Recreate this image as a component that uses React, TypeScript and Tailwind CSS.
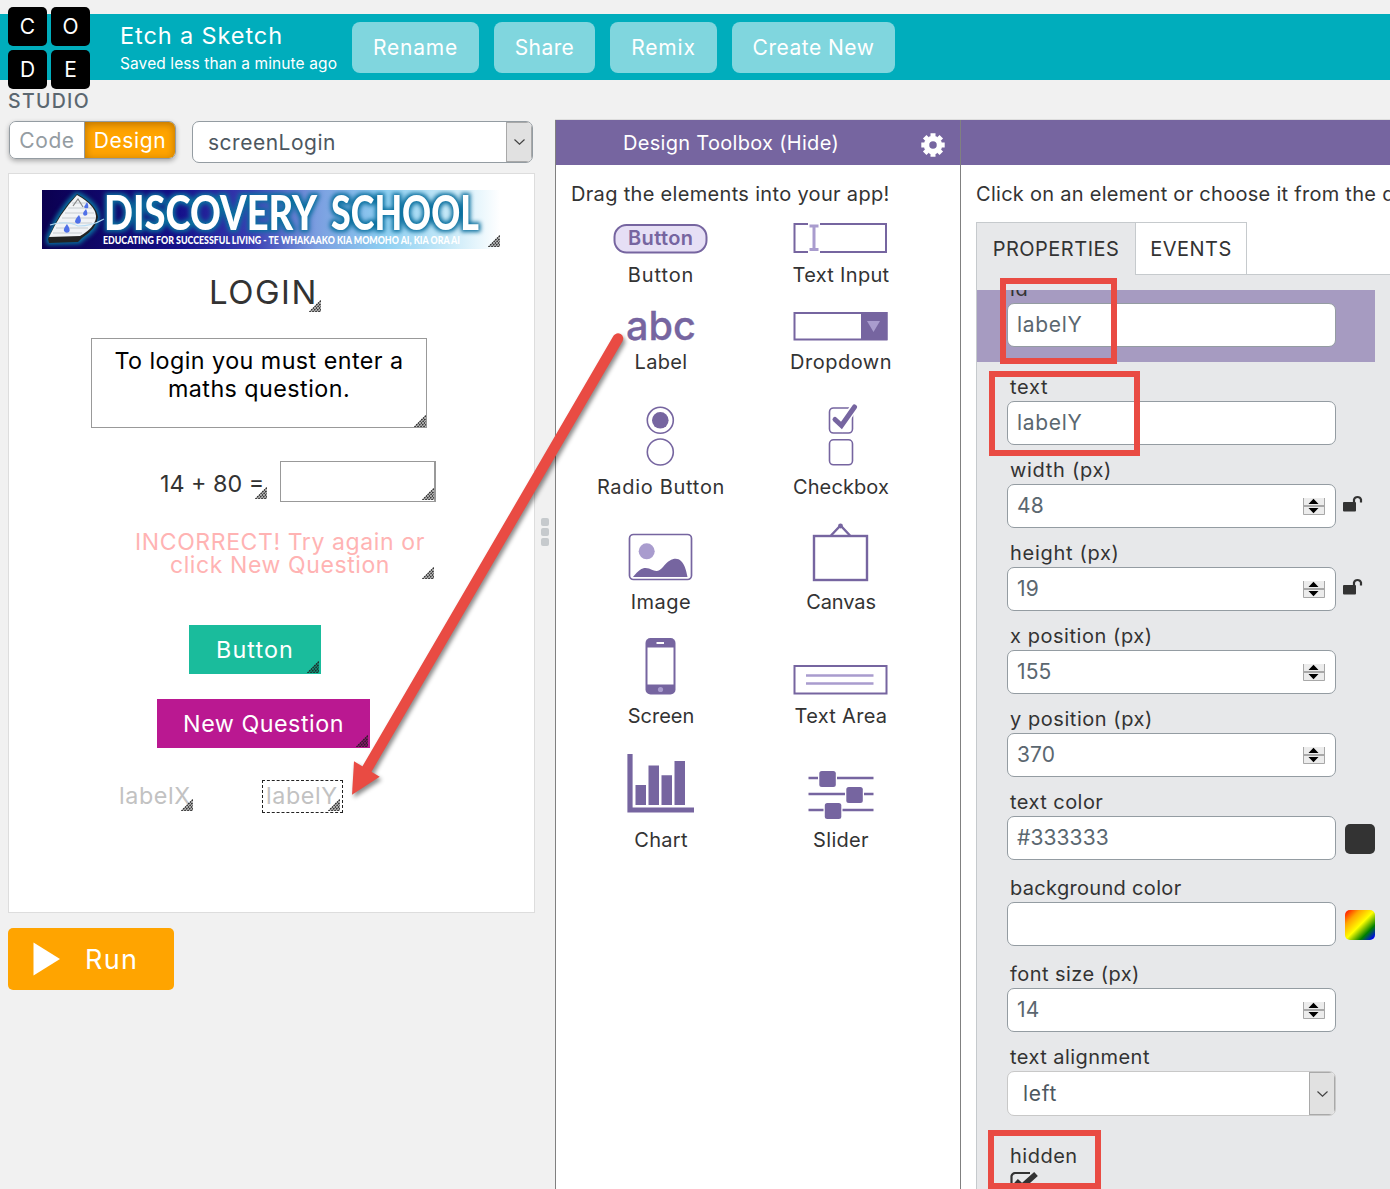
import type { ReactNode } from "react";

const PURPLE = "#7665a0";
const LILAC = "#a99cce";

function Grip({ className }: { className: string }) {
  return (
    <svg className={`absolute ${className}`} width="12" height="12" viewBox="0 0 12 12">
      <path d="M0 12L12 0V12Z" fill="#000" fillOpacity="0.25" />
      <path
        d="M0.5 12L12 0.5M3.5 12L12 3.5M6.5 12L12 6.5M9.5 12L12 9.5"
        stroke="#222"
        strokeWidth="1.3"
        strokeDasharray="1.6 0.8"
      />
    </svg>
  );
}

function LogoTile({ children }: { children: string }) {
  return (
    <div className="flex h-[39px] w-[39px] items-center justify-center rounded-[5px] bg-black text-[21px] leading-none text-white">
      {children}
    </div>
  );
}

function Logo() {
  return (
    <div className="absolute left-[8px] top-[7px] w-[82px]">
      <div className="grid grid-cols-2 gap-[4px]">
        <LogoTile>C</LogoTile>
        <LogoTile>O</LogoTile>
        <LogoTile>D</LogoTile>
        <LogoTile>E</LogoTile>
      </div>
      <div className="mt-[1px] text-[19.5px] font-medium leading-[22px] tracking-[1.3px] text-[#5b6770]">STUDIO</div>
    </div>
  );
}

function HeaderButton({ className, children }: { className: string; children: string }) {
  return (
    <button className={`h-[51px] rounded-[8px] bg-[#80d6de] pt-px text-[21px] text-white ${className}`}>{children}</button>
  );
}

function Header() {
  return (
    <header className="relative pt-[14px]">
      <div className="flex h-[66px] bg-[#00adbc] pl-[120px] text-white">
        <div className="w-[232px] whitespace-nowrap pt-[7px]">
          <div className="text-[23.5px] leading-[30px] tracking-[0.9px]">Etch a Sketch</div>
          <div className="pt-px text-[15.5px] leading-[23px] tracking-[0.1px]">Saved less than a minute ago</div>
        </div>
        <div className="flex gap-[15px] pt-[8px]">
          <HeaderButton className="w-[127px] tracking-[0.8px]">Rename</HeaderButton>
          <HeaderButton className="w-[101px] tracking-[0.4px]">Share</HeaderButton>
          <HeaderButton className="w-[107px] tracking-[0.8px]">Remix</HeaderButton>
          <HeaderButton className="w-[163px] tracking-[0.5px]">Create New</HeaderButton>
        </div>
      </div>
      <Logo />
    </header>
  );
}

function DropArrow({ className }: { className: string }) {
  return (
    <span className={`flex items-center justify-center border border-[#a9a9a9] bg-[#e1e1e1] ${className}`}>
      <svg width="11" height="6" viewBox="0 0 11 6" fill="none" stroke="#444" strokeWidth="1.2">
        <path d="M0.5 0.5L5.5 5.2L10.5 0.5" />
      </svg>
    </span>
  );
}

function Banner() {
  return (
    <svg className="absolute left-[33px] top-[16px]" width="458" height="59" viewBox="42 190 458 59">
      <defs>
        <linearGradient id="sky">
          <stop offset="0" stopColor="#0b0050" />
          <stop offset="0.3" stopColor="#15108a" />
          <stop offset="0.46" stopColor="#3b3fb4" />
          <stop offset="0.6" stopColor="#7b9ee0" />
          <stop offset="0.75" stopColor="#8fd0f2" />
          <stop offset="0.88" stopColor="#c4e8f8" />
          <stop offset="1" stopColor="#fff" />
        </linearGradient>
        <filter id="glow" x="-10%" y="-30%" width="120%" height="160%" colorInterpolationFilters="sRGB">
          <feMorphology in="SourceAlpha" operator="dilate" radius="2" result="fat" />
          <feGaussianBlur in="fat" stdDeviation="2" result="soft" />
          <feFlood floodColor="#0a6f9e" />
          <feComposite in2="soft" operator="in" result="halo" />
          <feMerge>
            <feMergeNode in="halo" />
            <feMergeNode in="SourceGraphic" />
          </feMerge>
        </filter>
      </defs>
      <rect x="42" y="190" width="458" height="59" fill="url(#sky)" />
      <g filter="url(#glow)">
        <path d="M48 239Q58 213 77 194Q96 204 98 217Q97 228 82 238L78 242L49 243Z" fill="#222" />
      </g>
      <path d="M49 237Q60 213 77 195Q95 205 96 216Q96 227 80 236Z" fill="#f1f3f6" />
      <path d="M72 203H86M68 208H92M65 213H94M62 218H95M59 223H92M56 228H88M53 233H82" stroke="#bcc0c8" strokeWidth="0.8" />
      <path d="M73 206L78 199L83 207" stroke="#888" fill="none" strokeWidth="1.2" />
      <path d="M50 225Q66 220 78 226Q92 226 104 219" stroke="#b8dcf4" fill="none" strokeWidth="1.2" />
      <g fill="#4f70e8">
        <path d="M67 224Q71 230 69 232Q66 234 64 231Q63 229 67 224Z" />
        <path d="M79 215Q82 220 80 223Q77 225 75 222Q75 219 79 215Z" />
        <path d="M86 209Q88 213 87 215Q84 217 83 214Q83 212 86 209Z" />
        <path d="M87 202Q89 206 88 208Q85 209 84 207Z" />
      </g>
      <g filter="url(#glow)" fill="#fff" className="font-['Lato',sans-serif] font-black">
        <text x="104" y="229.500" fontSize="47" textLength="213" lengthAdjust="spacingAndGlyphs">DISCOVERY</text>
        <text x="331" y="229.500" fontSize="47" textLength="148" lengthAdjust="spacingAndGlyphs">SCHOOL</text>
      </g>
      <text
        x="103"
        y="243.500"
        fontSize="11"
        textLength="357"
        lengthAdjust="spacingAndGlyphs"
        fill="#fff"
        className="font-['Lato',sans-serif] font-black"
      >
        EDUCATING FOR SUCCESSFUL LIVING - TE WHAKAAKO KIA MOMOHO AI, KIA ORA AI
      </text>
    </svg>
  );
}

function AppCanvas() {
  return (
    <div className="relative ml-[8px] mt-[10px] h-[740px] w-[527px] border border-[#ddd] bg-white">
      <Banner />
      <Grip className="left-[479px] top-[61px]" />

      <div className="absolute left-[200px] top-[98px] text-[33px] leading-[40px] tracking-[1.5px] text-[#333]">LOGIN</div>
      <Grip className="left-[300px] top-[126px]" />

      <div className="absolute left-[82px] top-[164px] h-[90px] w-[336px] whitespace-nowrap border border-[#999] pt-[8px] text-center text-[23.300px] leading-[28px] tracking-[0.45px] text-black">
        To login you must enter a<br />maths question.
      </div>
      <Grip className="left-[405px] top-[241px]" />

      <div className="absolute left-[151px] top-[295px] whitespace-nowrap text-[23.300px] leading-[30px] text-[#333]">14 + 80 =</div>
      <Grip className="left-[246px] top-[313px]" />
      <div className="absolute left-[271px] top-[287px] h-[41px] w-[156px] border border-r-2 border-[#999]" />
      <Grip className="left-[413px] top-[314px]" />

      <div className="absolute left-[121px] top-[357px] w-[300px] whitespace-nowrap text-center text-[23px] leading-[23px] tracking-[0.6px] text-[#ffb3b3]">
        INCORRECT! Try again or<br />click New Question
      </div>
      <Grip className="left-[413px] top-[393px]" />

      <div className="absolute left-[180px] top-[451px] flex h-[49px] w-[132px] items-center justify-center bg-[#1abc9c] pt-[2px] text-[23.300px] tracking-[1.1px] text-white">
        Button
      </div>
      <Grip className="left-[298px] top-[487px]" />

      <div className="absolute left-[148px] top-[525px] flex h-[49px] w-[213px] items-center justify-center whitespace-nowrap bg-[#ba1891] pt-[2px] text-[23.300px] tracking-[0.5px] text-white">
        New Question
      </div>
      <Grip className="left-[347px] top-[561px]" />

      <div className="absolute left-[110px] top-[607px] text-[23.300px] leading-[30px] tracking-[0.6px] text-[#c2c2c2]">labelX</div>
      <Grip className="left-[172px] top-[625px]" />

      <div className="absolute left-[253px] top-[606px] h-[33px] w-[81px] border border-dashed border-[#222]" />
      <div className="absolute left-[257px] top-[607px] text-[23.300px] leading-[30px] tracking-[0.6px] text-[#c2c2c2]">labelY</div>
      <Grip className="left-[319px] top-[625px]" />
    </div>
  );
}

function Preview() {
  return (
    <section className="w-[539px] shrink-0">
      <div className="flex pl-[9px] pt-[1px]">
        <div className="flex h-[38px] w-[167px] overflow-hidden rounded-[7px] border border-[#949ca2] text-[21px] tracking-[0.6px] shadow-[0_2px_5px_rgba(0,0,0,0.3)]">
          <div className="flex w-[75px] items-center justify-center border-r border-[#949ca2] bg-white pt-[2px] text-[#949ca2]">Code</div>
          <div className="flex flex-1 items-center justify-center bg-[#ffa400] pt-[2px] text-white shadow-[inset_0_2px_8px_rgba(120,70,0,0.55)]">Design</div>
        </div>
        <div className="ml-[16px] flex h-[42px] w-[341px] overflow-hidden rounded-[7px] border border-[#949ca2] bg-white">
          <div className="flex-1 pl-[15px] text-[21px] leading-[41px] tracking-[0.5px] text-[#4d575f]">screenLogin</div>
          <DropArrow className="w-[26px]" />
        </div>
      </div>
      <AppCanvas />
      <button className="ml-[8px] mt-[15px] flex h-[62px] w-[166px] items-center rounded-[5px] bg-[#ffa400] pl-[25px] text-[27px] text-white">
        <svg width="28" height="34" viewBox="0 0 28 34">
          <path d="M0.500 0.500L27 17L0.500 33.500Z" fill="#fff" />
        </svg>
        <span className="pl-[24px] pt-[2px] tracking-[1.3px]">Run</span>
      </button>
    </section>
  );
}

function Splitter() {
  return (
    <div className="flex w-[16px] shrink-0 flex-col gap-[2px] pl-[2px] pt-[398px]">
      <i className="h-[8px] w-[8px] rounded-[2px] bg-[#c6cacd]" />
      <i className="h-[8px] w-[8px] rounded-[2px] bg-[#c6cacd]" />
      <i className="h-[8px] w-[8px] rounded-[2px] bg-[#c6cacd]" />
    </div>
  );
}

function Tool({ label, box, height, track = "tracking-[0.3px]", children }: { label: string; box: string; height: number; track?: string; children: ReactNode }) {
  return (
    <div className="flex flex-col items-center justify-end">
      <svg width="100" height={height} viewBox={box} fill="none" stroke={PURPLE} strokeWidth="2">
        {children}
      </svg>
      <div className={`h-[28px] whitespace-nowrap text-[20px] leading-[28px] text-[#333] ${track}`}>{label}</div>
    </div>
  );
}

function Toolbox() {
  return (
    <section className="w-[405px] shrink-0 border-l border-[#808080] bg-white">
      <div className="flex h-[45px] items-center bg-[#7665a0] pl-[67px] text-[20px] text-white">
        <span className="w-[298px] whitespace-nowrap tracking-[0.3px]">Design Toolbox (Hide)</span>
        <svg width="24" height="24" viewBox="0 0 24 24" className="mt-[4px]" fill="none" stroke="#fff">
          <circle cx="12" cy="12" r="6.500" strokeWidth="5.500" />
          <path
            d="M12 0.300V4M12 20V23.700M0.300 12H4M20 12H23.700M3.700 3.700L6 6M18 18L20.300 20.300M3.700 20.300L6 18M18 6L20.300 3.700"
            strokeWidth="5"
          />
        </svg>
      </div>
      <div className="h-[49px] whitespace-nowrap pl-[15px] pt-[15px] text-[20px] leading-[28px] tracking-[0.32px] text-[#333]">
        Drag the elements into your app!
      </div>
      <div className="ml-[15px] grid grid-cols-[180px_180px] grid-rows-[75px_87px_125px_115px_114px_124px]">
        <Tool label="Button" track="tracking-[0.9px]" box="611 221 100 40" height={40}>
          <rect x="614.500" y="225" width="92" height="27.500" rx="12" fill="#e6dff5" />
          <text x="628" y="245" fontSize="20" fontWeight="600" textLength="65" stroke="none" fill={PURPLE}>Button</text>
        </Tool>
        <Tool label="Text Input" box="791 221 100 40" height={40}>
          <path d="M808 224H794.500V252H808M820 224H886V252H820" />
          <path d="M814 227V249M809.500 226H818.500M809.500 249.500H818.500" stroke={LILAC} strokeWidth="3" />
        </Tool>
        <Tool label="Label" box="611 303 100 45" height={45}>
          <text x="626" y="340" fontSize="40" fontWeight="500" textLength="70" lengthAdjust="spacingAndGlyphs" stroke={PURPLE} strokeWidth="0.300" fill={PURPLE}>abc</text>
        </Tool>
        <Tool label="Dropdown" track="tracking-[0.5px]" box="791 303 100 45" height={45}>
          <rect x="794.500" y="313" width="92" height="26.500" />
          <path d="M861 312H887.500V340H861Z" fill={PURPLE} stroke="none" />
          <path d="M867 321H880L873.500 332Z" fill={LILAC} stroke="none" />
        </Tool>
        <Tool label="Radio Button" track="tracking-[0.7px]" box="611 403 100 70" height={70}>
          <circle cx="660.300" cy="420.300" r="13" strokeWidth="1.600" />
          <circle cx="660.300" cy="420.300" r="8.300" fill={PURPLE} stroke="none" />
          <circle cx="660.300" cy="452" r="13" strokeWidth="1.600" />
        </Tool>
        <Tool label="Checkbox" track="tracking-[0.1px]" box="791 403 100 70" height={70}>
          <rect x="829.500" y="408" width="23" height="25" rx="4" strokeWidth="1.600" />
          <path d="M834.500 419.500L841.500 426L854.500 406.500" stroke="#fff" strokeWidth="8" />
          <path d="M835 419.500L841.500 425.500L854.500 407" strokeWidth="5" strokeLinecap="round" />
          <rect x="829.500" y="439.800" width="23" height="25" rx="4" strokeWidth="1.600" />
        </Tool>
        <Tool label="Image" track="tracking-[0.5px]" box="611 525 100 63" height={63}>
          <rect x="629.500" y="534.500" width="62" height="45" rx="4" strokeWidth="1.700" />
          <circle cx="646.700" cy="551.300" r="8" fill={LILAC} stroke="none" />
          <path d="M633 577C640 568 644 567 649 568.500C655 571 658 573 663 567C670 558 677 557 681 561C685 565 686 570 687.500 577Z" fill={PURPLE} stroke="none" />
        </Tool>
        <Tool label="Canvas" track="tracking-[-0.1px]" box="791 520 100 68" height={68}>
          <rect x="814" y="536" width="53" height="44" strokeWidth="2.400" />
          <path d="M831 535.500L840.500 525.500L850 535.500" strokeWidth="2.400" />
          <circle cx="840.500" cy="526" r="2.400" fill={PURPLE} stroke="none" />
        </Tool>
        <Tool label="Screen" track="tracking-[0px]" box="611 632 100 70" height={70}>
          <rect x="645.500" y="638" width="30" height="56.500" rx="5" fill={PURPLE} stroke="none" />
          <rect x="647.500" y="647.500" width="26" height="37" fill="#fff" stroke="none" />
          <path d="M656.500 643H664" stroke="#fff" />
          <circle cx="660.500" cy="689.500" r="2.600" fill={LILAC} stroke="none" />
        </Tool>
        <Tool label="Text Area" box="791 632 100 70" height={70}>
          <rect x="794.500" y="666" width="92" height="27.500" />
          <path d="M806 675.500H873.500M806 683.500H873.500" stroke={LILAC} strokeWidth="2.700" />
        </Tool>
        <Tool label="Chart" box="611 750 100 76" height={76}>
          <path d="M630 754V810H694" strokeWidth="5.200" />
          <path d="M635.500 785H646V805H635.500ZM648.500 765.500H659V805H648.500ZM661.500 775.300H672V805H661.500ZM674.500 761H685V805H674.500Z" fill={PURPLE} stroke="none" />
        </Tool>
        <Tool label="Slider" box="791 750 100 76" height={76}>
          <path d="M808.500 778H818M837 778H873.500M808.500 794H845M864 794H873.500M808.500 810H823.500M842.500 810H873.500" strokeWidth="2.600" />
          <g fill={PURPLE} stroke="none">
            <rect x="819.300" y="771" width="16.500" height="16" rx="2.500" />
            <rect x="846.300" y="787" width="16.500" height="16" rx="2.500" />
            <rect x="824.800" y="803" width="16.500" height="16" rx="2.500" />
          </g>
        </Tool>
      </div>
    </section>
  );
}

function Spinner() {
  return (
    <svg width="24" height="19" viewBox="0 0 24 19">
      <rect x="1" y="1" width="22" height="17" fill="#ececec" />
      <path d="M1.500 1V17.500H22.500V1M1 9H23" stroke="#a8a8a8" fill="none" />
      <path d="M1 9H23" stroke="#a8a8a8" strokeWidth="2" />
      <path d="M6.500 7L11.500 1.800L16.500 7ZM6.500 11L11.500 16.200L16.500 11Z" fill="#000" />
    </svg>
  );
}

function OpenLock() {
  return (
    <svg width="20" height="18" viewBox="0 0 20 18">
      <rect x="0" y="8" width="13" height="9.500" rx="1" fill="#333" />
      <path d="M11 9V5.500A3.700 3.700 0 0 1 18 5.500V8.500" fill="none" stroke="#333" strokeWidth="2.200" />
    </svg>
  );
}

function Field({ label, value, track = "tracking-[0.7px]", valueTrack = "tracking-[0.1px]", spinner, side, tall }: { label: string; value: string; track?: string; valueTrack?: string; spinner?: boolean; side?: ReactNode; tall?: boolean }) {
  return (
    <div className={`pl-[30px] ${tall ? "h-[86px]" : "h-[83px]"}`}>
      <div className={`h-[28px] whitespace-nowrap pl-[3px] text-[20px] leading-[28px] text-[#333] ${track}`}>{label}</div>
      <div className="flex items-start">
        <div className="flex h-[44px] w-[329px] items-center justify-between rounded-[7px] border border-[#949ca2] bg-white pl-[9px] pr-[9px] text-[21px] text-[#5b6770]">
          <span className={valueTrack}>{value}</span>
          {spinner && <Spinner />}
        </div>
        {side}
      </div>
    </div>
  );
}

function Properties() {
  return (
    <section className="min-w-0 flex-1 border-l border-[#808080] bg-white">
      <div className="h-[45px] bg-[#7665a0]" />
      <div className="h-[57px] whitespace-nowrap pl-[15px] pt-[15px] text-[20px] leading-[28px] tracking-[0.28px] text-[#333]">
        Click on an element or choose it from the dropdown
      </div>
      <div className="ml-[15px] flex h-[53px] text-[20px] tracking-[0.5px] text-[#333]">
        <div className="flex w-[159px] items-center justify-center border-l border-t border-[#c6cacd] bg-[#e7e8ea]">PROPERTIES</div>
        <div className="flex w-[112px] items-center justify-center border border-[#c6cacd]">EVENTS</div>
        <div className="flex-1 border-b border-[#c6cacd]" />
      </div>
      <div className="ml-[15px] h-[914px] border-l border-[#c6cacd] bg-[#e7e8ea] pt-[15px]">
        <div className="h-[899px] overflow-hidden">
          <div className="h-[72px] w-[398px] overflow-hidden bg-[#a69bc1]">
            <div className="-mt-[15px]">
              <Field label="id" value="labelY" valueTrack="tracking-[0.7px]" />
            </div>
          </div>
          <div className="pt-[11px]">
            <Field label="text" value="labelY" valueTrack="tracking-[0.7px]" />
            <Field label="width (px)" value="48" spinner side={<div className="pl-[7px] pt-[10px]"><OpenLock /></div>} />
            <Field label="height (px)" value="19" spinner side={<div className="pl-[7px] pt-[10px]"><OpenLock /></div>} />
            <Field label="x position (px)" value="155" spinner track="tracking-[0.55px]" />
            <Field label="y position (px)" value="370" spinner track="tracking-[0.55px]" />
            <Field label="text color" value="#333333" tall track="tracking-[0.45px]" side={<div className="ml-[9px] mt-[8px] h-[30px] w-[30px] rounded-[5px] bg-[#333]" />} />
            <Field
              label="background color"
              value=""
              tall
              track="tracking-[0.32px]"
              side={<div className="ml-[9px] mt-[8px] h-[30px] w-[30px] rounded-[5px] bg-[linear-gradient(135deg,red,orange_25%,yellow_50%,green_75%,blue_95%)]" />}
            />
            <Field label="font size (px)" value="14" spinner track="tracking-[0.45px]" />
            <div className="pl-[30px]">
              <div className="h-[28px] pl-[3px] text-[20px] leading-[28px] tracking-[0.45px] text-[#333]">text alignment</div>
              <div className="flex h-[45px] w-[329px] overflow-hidden rounded-[7px] border border-[#c8c8c8] bg-white">
                <div className="flex-1 pl-[15px] text-[21px] leading-[43px] tracking-[0.7px] text-[#4d575f]">left</div>
                <DropArrow className="w-[26px]" />
              </div>
            </div>
            <div className="pl-[33px] pt-[26px]">
              <div className="h-[28px] text-[20px] leading-[28px] tracking-[0.5px] text-[#333]">hidden</div>
              <svg width="30" height="26" viewBox="0 0 30 26" fill="none" stroke="#333" className="mt-[1px]">
                <path d="M20 2H5A4 4 0 0 0 1.500 5V20A4 4 0 0 0 5 24H18A4 4 0 0 0 22 20V14" strokeWidth="2.200" />
                <path d="M6 10L12 15.500L26 3" strokeWidth="5.500" />
              </svg>
            </div>
          </div>
        </div>
      </div>
    </section>
  );
}

function Annotations() {
  return (
    <div className="pointer-events-none absolute inset-0">
      <div className="absolute left-[1000px] top-[278px] h-[86px] w-[117px] border-[6px] border-[#e94b43]" />
      <div className="absolute left-[989px] top-[371px] h-[85px] w-[151px] border-[6px] border-[#e94b43]" />
      <div className="absolute left-[988px] top-[1130px] h-[59px] w-[113px] border-[6px] border-[#e94b43]" />
      <svg className="absolute left-[340px] top-[325px] drop-shadow-[2px_3px_2px_rgba(0,0,0,0.45)]" width="300" height="480" viewBox="340 325 300 480">
        <path d="M618 338.500L367 769" stroke="#e94b43" strokeWidth="10.500" strokeLinecap="round" />
        <path d="M354 761.300L379.700 776.700L352 794.700Z" fill="#e94b43" />
      </svg>
    </div>
  );
}

export default function App() {
  return (
    <div className="relative h-[1189px] w-[1390px] overflow-hidden bg-[#f1f1f1] font-['Inter',sans-serif]">
      <Header />
      <div className="mt-[39px] flex h-[1070px]">
        <div className="flex w-[555px] shrink-0 pt-px">
          <Preview />
          <Splitter />
        </div>
        <div className="flex min-w-0 flex-1 border-t border-[#ddd]">
          <Toolbox />
          <Properties />
        </div>
      </div>
      <Annotations />
    </div>
  );
}
